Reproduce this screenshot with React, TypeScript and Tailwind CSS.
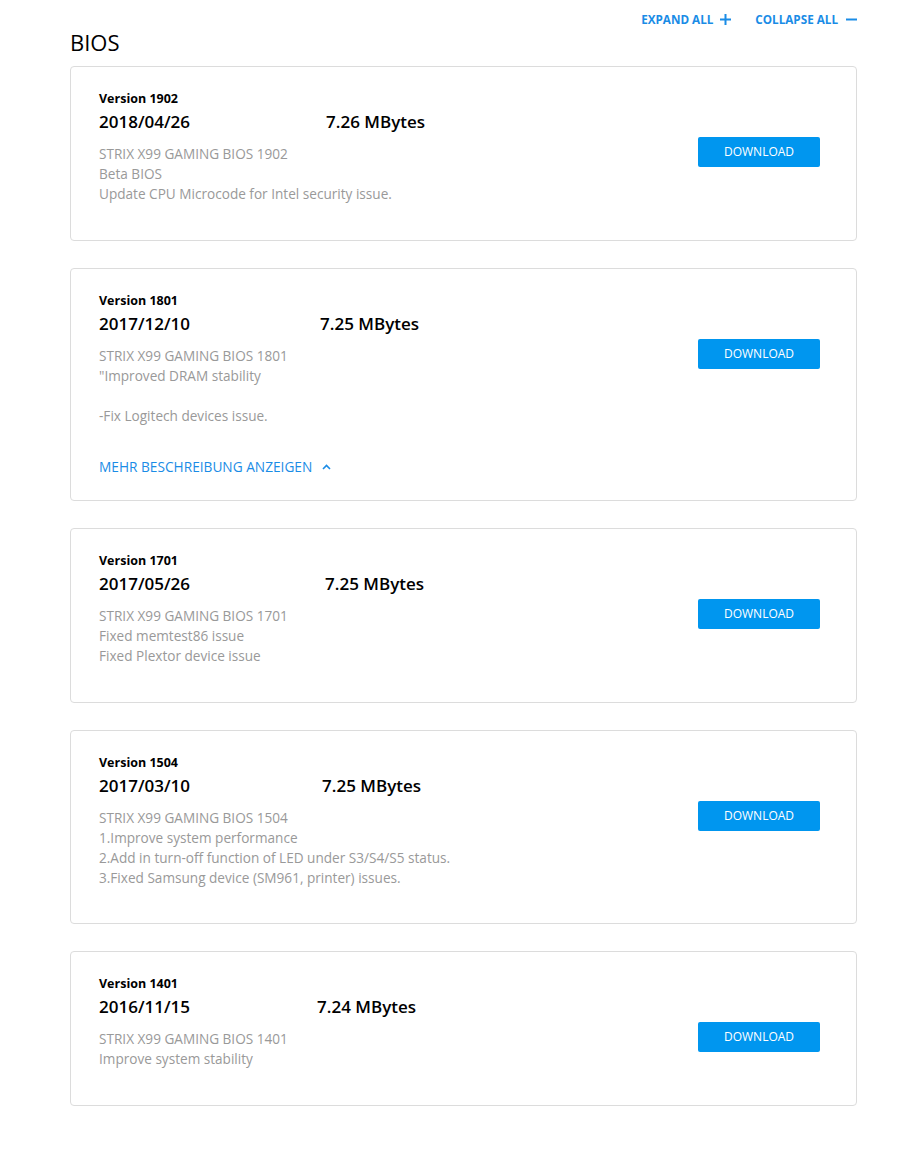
const items = [
  {
    version: "1902",
    date: "2018/04/26",
    size: "7.26 MBytes",
    gap: "ml-[136px]",
    pb: "pb-[36px]",
    lines: ["STRIX X99 GAMING BIOS 1902", "Beta BIOS", "Update CPU Microcode for Intel security issue."],
  },
  {
    version: "1801",
    date: "2017/12/10",
    size: "7.25 MBytes",
    gap: "ml-[130px]",
    pb: "pb-[36px]",
    lines: ["STRIX X99 GAMING BIOS 1801", "\"Improved DRAM stability", "", "-Fix Logitech devices issue."],
    more: true,
  },
  {
    version: "1701",
    date: "2017/05/26",
    size: "7.25 MBytes",
    gap: "ml-[135px]",
    pb: "pb-[36px]",
    lines: ["STRIX X99 GAMING BIOS 1701", "Fixed memtest86 issue", "Fixed Plextor device issue"],
  },
  {
    version: "1504",
    date: "2017/03/10",
    size: "7.25 MBytes",
    gap: "ml-[132px]",
    pb: "pb-[35px]",
    lines: [
      "STRIX X99 GAMING BIOS 1504",
      "1.Improve system performance",
      "2.Add in turn-off function of LED under S3/S4/S5 status.",
      "3.Fixed Samsung device (SM961, printer) issues.",
    ],
  },
  {
    version: "1401",
    date: "2016/11/15",
    size: "7.24 MBytes",
    gap: "ml-[127px]",
    pb: "pb-[36px]",
    lines: ["STRIX X99 GAMING BIOS 1401", "Improve system stability"],
  },
];

function BiosCard({ item }: { item: (typeof items)[number] }) {
  return (
    <div className={`flex justify-between rounded border border-[#dcdcdc] bg-white pl-[28px] pr-[36px] pt-[24px] ${item.pb}`}>
      <div>
        <div className="text-[12.5px] font-bold leading-[16px] text-black">Version {item.version}</div>
        <div className="mt-[2px] flex text-[17px] font-semibold leading-[26px] text-black">
          <span>{item.date}</span>
          <span className={item.gap}>{item.size}</span>
        </div>
        <div className="mt-[9px] text-[13.6px] leading-[20px] text-[#999999]">
          {item.lines.map((l, i) => (
            <div key={i} className="h-[20px] whitespace-nowrap">{l}</div>
          ))}
        </div>
        {item.more && (
          <button className="mt-[31px] -mb-[13px] flex items-center gap-[10px] text-[13.7px] leading-[20px] text-[#1a8ce6]">
            MEHR BESCHREIBUNG ANZEIGEN
            <svg width="9" height="6" viewBox="0 0 9 6" fill="none" stroke="currentColor" strokeWidth="1.6">
              <path d="M1 5l3.5-3.5L8 5" />
            </svg>
          </button>
        )}
      </div>
      <div className="pt-[46px]">
        <button className="h-[30px] w-[122px] rounded-[2px] bg-[#0096ef] text-[12px] text-white">DOWNLOAD</button>
      </div>
    </div>
  );
}

export default function App() {
  return (
    <div className="min-h-[1168px] bg-white font-['Open_Sans',sans-serif]">
      <div className="ml-[70px] w-[787px] pb-[60px]">
        <div className="flex justify-end gap-[24px] pt-[11px] text-[11.7px] font-bold leading-[16px] text-[#1a8ce6]">
          <button className="flex items-center gap-[7px]">
            EXPAND ALL
            <svg width="11" height="11" viewBox="0 0 11 11" stroke="currentColor" strokeWidth="2">
              <path d="M5.5 0v11M0 5.5h11" />
            </svg>
          </button>
          <button className="flex items-center gap-[8px]">
            COLLAPSE ALL
            <svg width="11" height="11" viewBox="0 0 11 11" stroke="currentColor" strokeWidth="2">
              <path d="M0 5.5h11" />
            </svg>
          </button>
        </div>
        <h1 className="text-[22px] leading-[30px] text-black">BIOS</h1>
        <div className="mt-[9px] flex flex-col gap-[27px]">
          {items.map((it) => (
            <BiosCard key={it.version} item={it} />
          ))}
        </div>
      </div>
    </div>
  );
}
